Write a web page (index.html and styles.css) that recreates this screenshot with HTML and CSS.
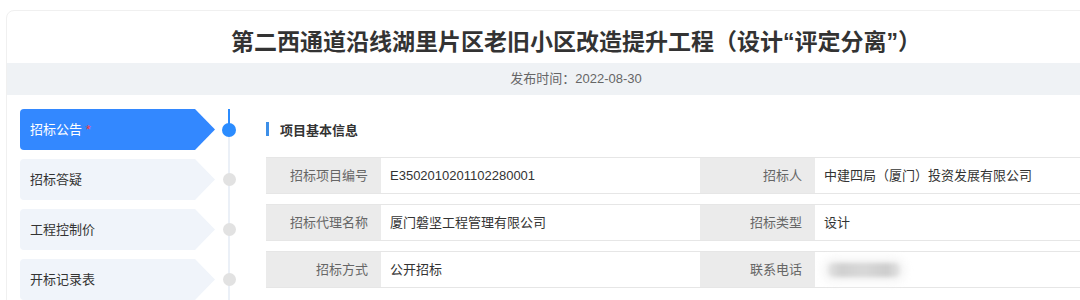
FILE: index.html
```html
<!DOCTYPE html>
<html lang="zh-CN">
<head>
<meta charset="utf-8">
<title>招标公告</title>
<link rel="stylesheet" href="styles.css">
</head>
<body>
<div class="card">
  <h1 class="title">第二西通道沿线湖里片区老旧小区改造提升工程（设计<span class="q">“</span>评定分离<span class="q">”</span>）</h1>
  <div class="pubdate">发布时间：2022-08-30</div>
  <div class="main">
    <div class="steps">
      <div class="step active"><div class="step-label">招标公告 <span class="req">*</span></div><div class="step-node"><span class="dot"></span></div></div>
      <div class="step"><div class="step-label">招标答疑</div><div class="step-node"><span class="dot"></span></div></div>
      <div class="step"><div class="step-label">工程控制价</div><div class="step-node"><span class="dot"></span></div></div>
      <div class="step"><div class="step-label">开标记录表</div><div class="step-node"><span class="dot"></span></div></div>
    </div>
    <div class="content">
      <div class="section-title"><span class="bar"></span>项目基本信息</div>
      <div class="info-row">
        <div class="lbl">招标项目编号</div><div class="val">E3502010201102280001</div>
        <div class="lbl">招标人</div><div class="val">中建四局（厦门）投资发展有限公司</div>
      </div>
      <div class="info-row">
        <div class="lbl">招标代理名称</div><div class="val">厦门磐坚工程管理有限公司</div>
        <div class="lbl">招标类型</div><div class="val">设计</div>
      </div>
      <div class="info-row">
        <div class="lbl">招标方式</div><div class="val">公开招标</div>
        <div class="lbl">联系电话</div><div class="val"><span class="blur"></span></div>
      </div>
    </div>
  </div>
</div>
</body>
</html>
```
FILE: styles.css
```css
html, body {
  margin: 0;
  padding: 0;
  background: #fff;
  overflow: hidden;
}
body {
  font-family: "Liberation Sans", "Noto Sans CJK SC", sans-serif;
  color: #333;
  width: 1080px;
  height: 300px;
}
.card {
  margin: 10px 0 0 6px;
  width: 1138px;
  height: 400px;
  border: 1px solid #f0f0f0;
  border-radius: 8px;
  background: #fff;
}
.title {
  margin: 0;
  height: 46px;
  padding-top: 6px;
  line-height: 46px;
  text-align: center;
  font-size: 23px;
  font-weight: bold;
  color: #333;
  font-family: "Noto Sans CJK SC", sans-serif;
}
.q {
  font-family: "Liberation Sans", sans-serif;
}
.pubdate {
  height: 32px;
  line-height: 32px;
  background: #eff2f5;
  text-align: center;
  font-size: 13px;
  color: #666;
}
.main {
  display: flex;
  padding: 14px 0 0 13px;
}
.steps {
  display: flex;
  flex-direction: column;
  gap: 9px;
  width: 223px;
  background: linear-gradient(#ebf0f7, #ebf0f7) no-repeat 208px 0 / 2px 100%;
}
.step {
  display: flex;
  height: 41px;
}
.step-label {
  width: 195px;
  height: 41px;
  box-sizing: border-box;
  padding-left: 10px;
  line-height: 41px;
  font-size: 13px;
  color: #333;
  background: #f0f4fa;
  border-radius: 4px 0 0 4px;
  clip-path: polygon(0 0, calc(100% - 20px) 0, 100% 50%, calc(100% - 20px) 100%, 0 100%);
}
.step.active .step-label {
  background: #3388ff;
  color: #fff;
}
.req {
  color: #ff3b3b;
}
.step-node {
  width: 28px;
  display: flex;
  align-items: center;
  justify-content: center;
}
.step.active .step-node {
  background: linear-gradient(#2b8cff, #2b8cff) no-repeat 13px 0 / 2px 50%;
}
.dot {
  width: 13px;
  height: 13px;
  border-radius: 50%;
  background: #e2e2e2;
}
.step.active .dot {
  width: 14px;
  height: 14px;
  background: #2b8cff;
}
.content {
  flex: 1;
  margin-left: 23px;
  padding-top: 13px;
  padding-right: 10px;
}
.section-title {
  display: flex;
  align-items: center;
  height: 14px;
  font-size: 13px;
  font-weight: bold;
  color: #333;
  margin-bottom: 21px;
}
.bar {
  width: 3px;
  height: 14px;
  background: #3d8fe8;
  margin-right: 11px;
}
.info-row {
  display: grid;
  grid-template-columns: 115px 319px 115px 1fr;
  height: 37px;
  box-sizing: border-box;
  border-top: 1px solid #e6e6e6;
  border-bottom: 1px solid #e6e6e6;
  margin-bottom: 10px;
  font-size: 13px;
}
.lbl {
  background: #ebebeb;
  color: #666;
  text-align: right;
  padding-right: 13px;
  line-height: 35px;
}
.val {
  padding-left: 9px;
  line-height: 35px;
  color: #333;
  display: flex;
  align-items: center;
}
.blur {
  display: block;
  width: 72px;
  height: 14px;
  margin-left: 4px;
  border-radius: 5px;
  background: linear-gradient(90deg, #e4e4e4 0%, #d0d0d0 18%, #d8d8d8 50%, #cdcdcd 82%, #e4e4e4 100%);
  filter: blur(2px);
  box-shadow: 0 0 8px 5px #f3f3f3;
}
```
